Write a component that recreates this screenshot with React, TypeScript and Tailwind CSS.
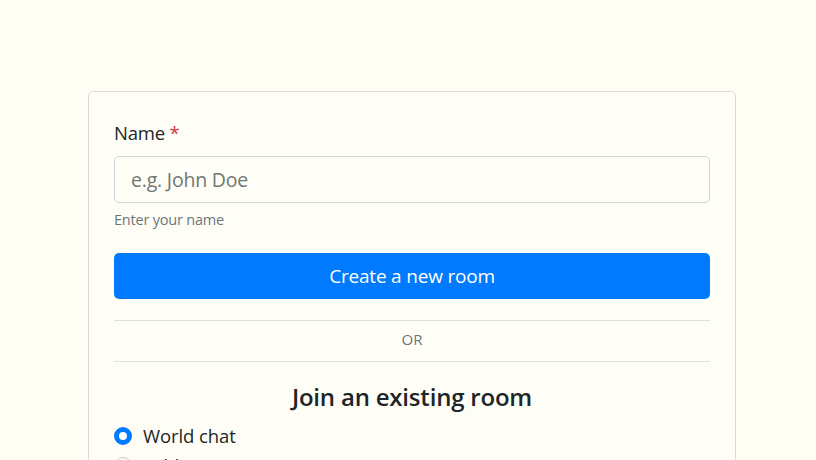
import React from "react";

export default function App() {
  return (
    <div
      className="w-[816px] h-[460px] overflow-hidden bg-[#fffef4] pl-[88px] pt-[91px]"
      style={{ fontFamily: '"Open Sans", "Noto Sans", sans-serif' }}
    >
      <div className="w-[648px] h-[400px] rounded-[5px] border border-[#dcdcd4] bg-[#fffef6] px-[25px] pt-[27px]">
        <label className="block text-[18.5px] leading-[27px] text-[#212529] tracking-[-0.2px]">
          Name <span className="text-[#dc3545]">*</span>
        </label>
        <div className="mt-[10px] h-[47px] rounded-[5px] border border-[#ced4da] bg-[#fffef6] flex items-center pl-[16px] pt-[1px] text-[19.5px] text-[#6f7775] tracking-[-0.2px]">
          e.g. John Doe
        </div>
        <div className="mt-[6px] text-[14.5px] leading-[21px] text-[#6c757d] tracking-[-0.2px]">
          Enter your name
        </div>
        <button className="mt-[23px] w-full h-[46px] rounded-[5px] bg-[#007bff] text-white text-[19px] tracking-[-0.2px] flex items-center justify-center">
          Create a new room
        </button>
        <div className="mt-[21px] border-t border-[#dedede]" />
        <div className="h-[40px] flex items-center justify-center text-[15px] text-[#6c757d] pb-[3px]">
          OR
        </div>
        <div className="border-t border-[#dedede]" />
        <h4 className="mt-[20px] text-center text-[24px] leading-[30px] font-semibold text-[#212529] tracking-[-0.2px]">
          Join an existing room
        </h4>
        <div className="mt-[12px] flex flex-col gap-[6px]">
          <div className="flex items-center gap-[11px] h-[24px]">
            <span className="w-[18px] h-[18px] rounded-full border-[5px] border-[#007bff] bg-white" />
            <span className="text-[18.5px] text-[#212529] tracking-[-0.1px]">World chat</span>
          </div>
          <div className="flex items-center gap-[11px] h-[24px]">
            <span className="w-[18px] h-[18px] rounded-full border border-[#c8c8c8] bg-white" />
            <span className="text-[18.5px] text-[#212529] tracking-[-0.1px]">Lobby</span>
          </div>
        </div>
      </div>
    </div>
  );
}
